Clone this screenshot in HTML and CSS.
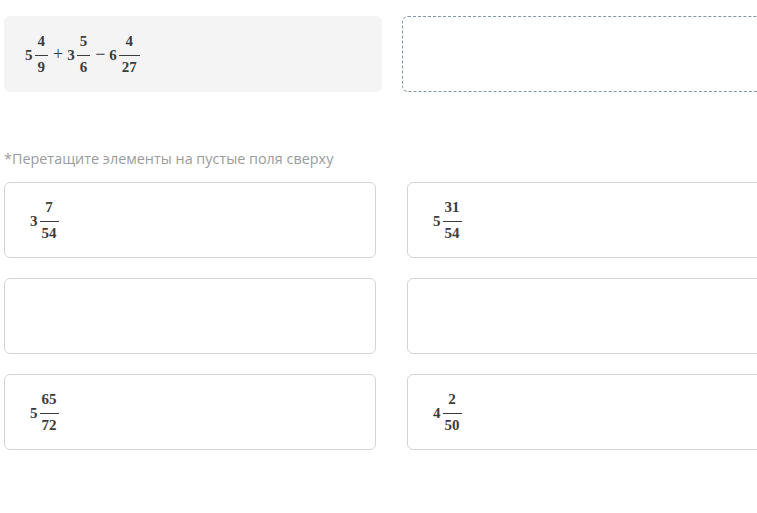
FILE: index.html
```html
<!DOCTYPE html>
<html lang="ru">
<head>
    <meta charset="UTF-8">
    <title>Перетащите элементы</title>
    <link rel="stylesheet" href="styles.css">
</head>
<body>
    <div class="task">
        <div class="expr">
            <div class="math">
                <span class="whole">5</span>
                <span class="frac"><span class="num">4</span><span class="den">9</span></span>
                <span class="op">+</span>
                <span class="whole">3</span>
                <span class="frac"><span class="num">5</span><span class="den">6</span></span>
                <span class="op">−</span>
                <span class="whole">6</span>
                <span class="frac"><span class="num">4</span><span class="den">27</span></span>
            </div>
        </div>
        <div class="drop"></div>
    </div>

    <p class="hint">*Перетащите элементы на пустые поля сверху</p>

    <div class="options">
        <div class="card">
            <div class="math">
                <span class="whole">3</span>
                <span class="frac"><span class="num">7</span><span class="den">54</span></span>
            </div>
        </div>
        <div class="card">
            <div class="math">
                <span class="whole">5</span>
                <span class="frac"><span class="num">31</span><span class="den">54</span></span>
            </div>
        </div>
        <div class="card"></div>
        <div class="card"></div>
        <div class="card">
            <div class="math">
                <span class="whole">5</span>
                <span class="frac"><span class="num">65</span><span class="den">72</span></span>
            </div>
        </div>
        <div class="card">
            <div class="math">
                <span class="whole">4</span>
                <span class="frac"><span class="num">2</span><span class="den">50</span></span>
            </div>
        </div>
    </div>
</body>
</html>
```

FILE: styles.css
```css
html {
    overflow: hidden;
}
body {
    margin: 0;
    padding: 16px 0 0 4px;
    background-color: #fff;
    font-family: "Open Sans", Arial, sans-serif;
}
.task {
    display: grid;
    grid-template-columns: 378px 378px;
    gap: 20px;
    width: 776px;
}
.expr {
    background-color: #f4f4f4;
    border-radius: 6px;
    height: 76px;
    padding-left: 21px;
    display: flex;
    align-items: center;
}
.drop {
    height: 74px;
    border: 1px dashed #7f98a4;
    border-radius: 6px;
}
.hint {
    margin: 58px 0 14px;
    font-size: 14.4px;
    line-height: 18px;
    color: #9b9b9b;
}
.options {
    display: grid;
    grid-template-columns: 372px 372px;
    gap: 20px 31px;
    width: 775px;
}
.card {
    height: 74px;
    border: 1px solid #d4d4d4;
    border-radius: 6px;
    padding-left: 25px;
    display: flex;
    align-items: center;
}
.math {
    display: flex;
    align-items: center;
    font-family: "Liberation Serif", "Times New Roman", serif;
    font-weight: bold;
    font-size: 15px;
    color: #3c3c3c;
}
.whole {
    margin-top: 3px;
    margin-right: 2px;
}
.frac {
    display: inline-flex;
    flex-direction: column;
    align-items: stretch;
    text-align: center;
}
.num {
    line-height: 12px;
    padding: 0 2px 8px;
    border-bottom: 1px solid #3c3c3c;
}
.expr .num,
.expr .den {
    padding-left: 3px;
    padding-right: 3px;
}
.den {
    line-height: 12px;
    padding: 5px 2px 0;
}
.op {
    margin: 1px 4px 0 5px;
    font-weight: normal;
    font-size: 18px;
}
```
